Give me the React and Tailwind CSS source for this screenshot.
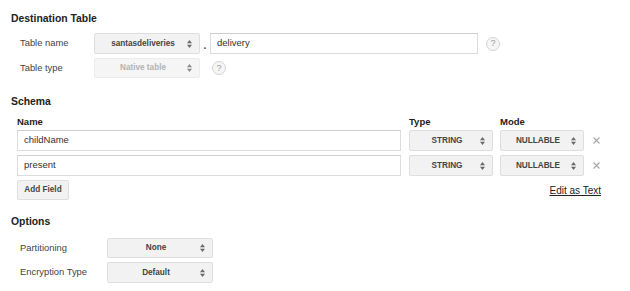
import React from "react";

const font = { fontFamily: '"Liberation Sans", Arial, sans-serif' };

function Arrows({ light }) {
  return (
    <svg width="5" height="8" viewBox="0 0 5 8" className="shrink-0">
      <path d="M0 3.2 L2.5 0 L5 3.2 Z" fill={light ? "#8a8a8a" : "#6a6a6a"} />
      <path d="M0 4.8 L5 4.8 L2.5 8 Z" fill={light ? "#8a8a8a" : "#6a6a6a"} />
    </svg>
  );
}

function Select({ label, w, h = "h-[21px]", disabled }) {
  return (
    <div
      className={`${w} ${h} shrink-0 flex items-center rounded-[2px] border ${
        disabled ? "border-[#ececec] bg-[#f5f5f5]" : "border-[#dedede] bg-[#f2f2f2]"
      } pl-[4px] pr-[7px]`}
    >
      <div
        className={`flex-1 text-center text-[8.2px] leading-[10px] font-bold ${
          disabled ? "text-[#b3b3b3]" : "text-[#444]"
        }`}
      >
        {label}
      </div>
      <Arrows light={disabled} />
    </div>
  );
}

function Help() {
  return (
    <div className="w-[14px] h-[14px] rounded-full border border-[#d4d4d4] bg-[#f6f6f6] flex items-center justify-center text-[9px] leading-none text-[#9a9a9a]">
      ?
    </div>
  );
}

function Input({ value, w }) {
  return (
    <div
      className={`${w} h-[21px] shrink-0 border border-[#dcdcdc] border-t-[#cfcfcf] bg-white flex items-center pl-[6px] text-[9.5px] text-[#333]`}
    >
      {value}
    </div>
  );
}

function XIcon() {
  return (
    <svg width="7" height="7" viewBox="0 0 7 7" className="shrink-0">
      <path d="M0.5 0.5 L6.5 6.5 M6.5 0.5 L0.5 6.5" stroke="#a8a8a8" strokeWidth="1.2" />
    </svg>
  );
}

export default function App() {
  return (
    <div style={font} className="w-[630px] h-[291px] bg-white pl-[11px] pt-[12px] text-[#333] overflow-hidden">
      {/* Destination Table */}
      <div className="h-[14px] leading-[14px] text-[10.4px] font-bold text-[#222]">Destination Table</div>
      <div className="mt-[7px] pl-[9px] flex flex-col gap-[4px]">
        <div className="flex items-center h-[21px]">
          <div className="w-[74px] text-[9.4px] text-[#444]">Table name</div>
          <Select label="santasdeliveries" w="w-[106px]" />
          <div className="w-[10px] text-center text-[10px] font-bold text-[#444] pt-[4px]">.</div>
          <Input value="delivery" w="w-[268px]" />
          <div className="ml-[8px]">
            <Help />
          </div>
        </div>
        <div className="flex items-center h-[20px]">
          <div className="w-[74px] text-[9.4px] text-[#444]">Table type</div>
          <Select label="Native table" w="w-[106px]" h="h-[20px]" disabled />
          <div className="ml-[12px]">
            <Help />
          </div>
        </div>
      </div>

      {/* Schema */}
      <div className="mt-[17px] h-[14px] leading-[14px] text-[10.4px] font-bold text-[#222]">Schema</div>
      <div className="pl-[6px]">
        <div className="mt-[7px] flex h-[12px] leading-[12px] text-[9.5px] font-bold text-[#222]">
          <div className="w-[392px]">Name</div>
          <div className="w-[91px]">Type</div>
          <div>Mode</div>
        </div>
        <div className="mt-[2px] flex flex-col gap-[4px]">
          {["childName", "present"].map((n) => (
            <div key={n} className="flex items-center">
              <Input value={n} w="w-[384px]" />
              <div className="ml-[8px]">
                <Select label="STRING" w="w-[84px]" />
              </div>
              <div className="ml-[7px]">
                <Select label="NULLABLE" w="w-[84px]" />
              </div>
              <div className="ml-[9px]">
                <XIcon />
              </div>
            </div>
          ))}
        </div>
        <div className="mt-[4px] flex items-center w-[584px]">
          <div className="w-[52px] h-[20px] flex items-center justify-center rounded-[2px] border border-[#dedede] bg-[#f2f2f2] text-[8.2px] leading-[10px] font-bold text-[#444]">
            Add Field
          </div>
          <div className="ml-auto text-[10px] text-[#222] underline">Edit as Text</div>
        </div>
      </div>

      {/* Options */}
      <div className="mt-[15px] h-[14px] leading-[14px] text-[10.4px] font-bold text-[#222]">Options</div>
      <div className="mt-[9px] pl-[9px] flex flex-col gap-[4px]">
        <div className="flex items-center">
          <div className="w-[87px] text-[9.4px] text-[#444]">Partitioning</div>
          <Select label="None" w="w-[106px]" h="h-[20px]" />
        </div>
        <div className="flex items-center">
          <div className="w-[87px] text-[9.4px] text-[#444]">Encryption Type</div>
          <Select label="Default" w="w-[106px]" h="h-[21px]" />
        </div>
      </div>
    </div>
  );
}
